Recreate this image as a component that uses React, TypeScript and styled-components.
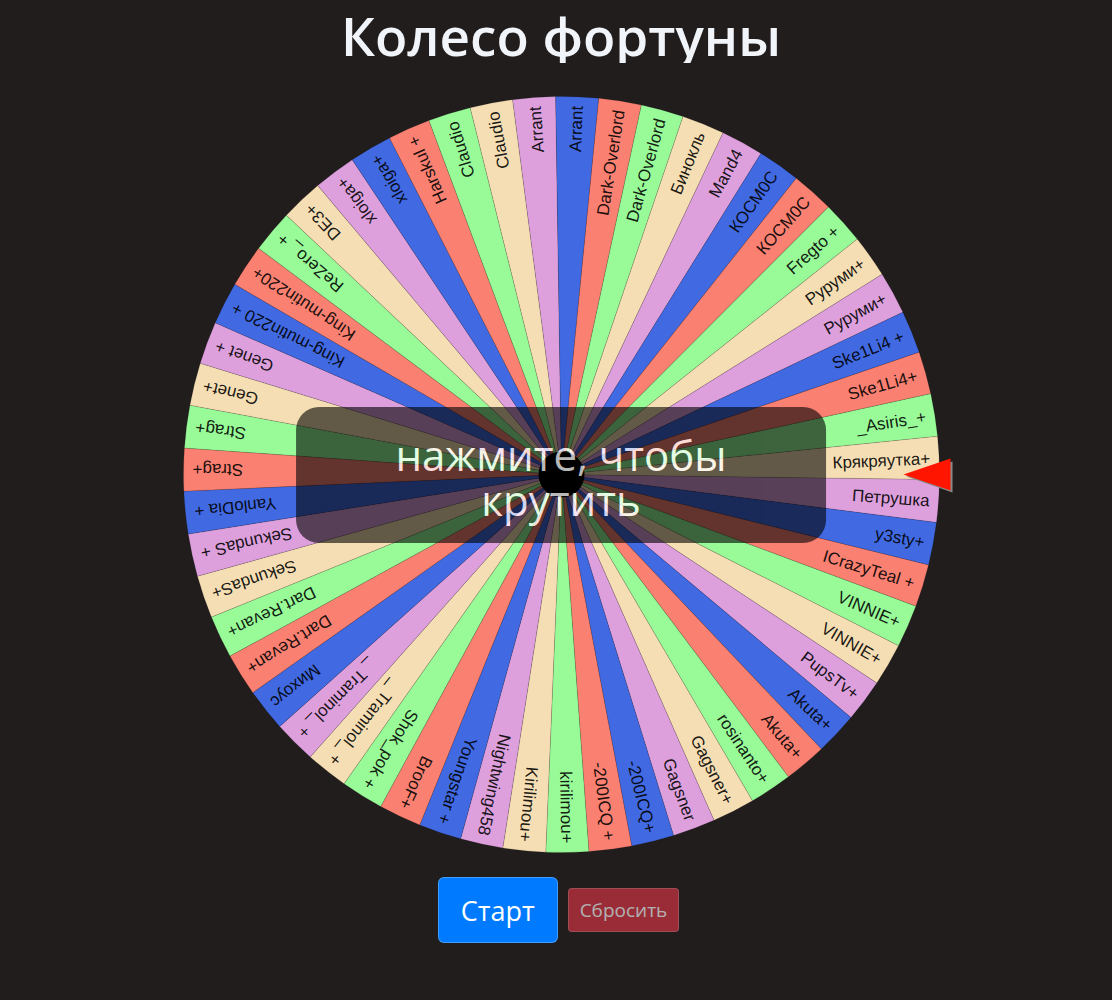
import React, { useState } from "react";
import styled, { createGlobalStyle } from "styled-components";

const GlobalStyle = createGlobalStyle`
  *, *::before, *::after { box-sizing: border-box; }
  body {
    margin: 0;
    background: #211d1d;
    color: #f1f4f8;
    font-family: "Segoe UI", "Open Sans", "Noto Sans", sans-serif;
  }
`;

const Page = styled.main`
  min-height: 100vh;
  display: flex;
  flex-direction: column;
  align-items: center;
  padding: 9px 0 24px 10px;
`;

const Title = styled.h1`
  margin: 0 0 33px;
  font-size: 53px;
  font-weight: 600;
  line-height: 54px;
  text-align: center;
  overflow: hidden;
`;

const WheelBox = styled.div`
  position: relative;
  width: 100%;
  max-width: 757px;
  aspect-ratio: 1;
`;

const WheelSvg = styled.svg`
  display: block;
  width: 100%;
  height: 100%;
  overflow: visible;
`;

const Disc = styled.g<{ $turn: number }>`
  transform: rotate(${(p) => p.$turn}deg);
  transition: transform 4s cubic-bezier(0.15, 0.6, 0.2, 1);
`;

const Label = styled.text`
  font-family: "Liberation Sans", Arial, sans-serif;
  font-size: 17px;
  fill: #000;
  fill-opacity: 0.9;
  text-anchor: end;
`;

const Prompt = styled.button`
  position: absolute;
  top: 50%;
  left: 50%;
  transform: translate(-50%, -50%);
  width: 70%;
  padding: 25px 72px 21px;
  border: 0;
  border-radius: 23px;
  background: rgba(0, 0, 0, 0.83);
  color: #fff;
  opacity: 0.72;
  font-family: inherit;
  font-size: 42px;
  line-height: 45px;
  text-align: center;
  cursor: pointer;
`;

const Actions = styled.div`
  display: flex;
  align-items: center;
  gap: 10px;
  margin: 24px 5px 0 0;
`;

const Button = styled.button<{ $kind: "primary" | "danger" }>`
  height: ${(p) => (p.$kind === "primary" ? 66 : 44)}px;
  padding: 0 ${(p) => (p.$kind === "primary" ? 22 : 11)}px;
  border: 1px solid rgba(255, 255, 255, 0.25);
  border-radius: ${(p) => (p.$kind === "primary" ? 6 : 4)}px;
  background: ${(p) => (p.$kind === "primary" ? "#007bff" : "#dc3545")};
  color: #fff;
  font-family: inherit;
  font-size: ${(p) => (p.$kind === "primary" ? 27 : 19)}px;
  line-height: 1;
  cursor: pointer;

  &:disabled {
    opacity: 0.65;
    cursor: default;
  }
`;

const COLORS = ["#dda0dd", "#4169e1", "#fa8072", "#98fb98", "#f5deb3"];

const NAMES = [
  "Петрушка", "y3sty+", "ICrazyTeal +", "VINNIE+", "VINNIE+",
  "PupsTv+", "Akuta+", "Akuta+", "rosinanto+", "Gagsner+",
  "Gagsner", "-200ICQ+", "-200ICQ +", "kirilimou+", "Kirilimou+",
  "Nightwing458", "Youngstar +", "BrooF+", "Shok_pok +", "_ Traminol_ +",
  "_ Traminol_ +", "Михоус", "Dart.Revan+", "Dart.Revan+", "SekundaS+",
  "SekundaS +", "YanloDia +", "Strag+", "Strag+", "Genet+",
  "Genet +", "King-mutin220 +", "King-mutin220+", "ReZero_ +", "DE3+",
  "xloiga+", "xloiga+", "Harskul +", "Claudio", "Claudio",
  "Arrant", "Arrant", "Dark-Overlord", "Dark-Overlord", "Бинокль",
  "Mand4", "КОСМ0С", "КОСМ0С", "Fregto +", "Руруми+",
  "Руруми+", "Ske1Li4 +", "Ske1Li4+", "_Asiris_+", "Крякряутка+",
];

const RADIUS = 378;
const LABEL_END = 369;
const STEP = 360 / NAMES.length;
const START = 0.75;

const rimPoint = (deg: number) => {
  const a = (deg * Math.PI) / 180;
  return `${(RADIUS * Math.cos(a)).toFixed(2)} ${(RADIUS * Math.sin(a)).toFixed(2)}`;
};

function Sector({ name, index }: { name: string; index: number }) {
  const from = START + index * STEP;
  return (
    <g>
      <path
        d={`M0 0L${rimPoint(from)}A${RADIUS} ${RADIUS} 0 0 1 ${rimPoint(from + STEP)}Z`}
        fill={COLORS[index % COLORS.length]}
        stroke="#000"
        strokeOpacity={0.2}
        strokeWidth={0.6}
      />
      <Label x={LABEL_END} y={6} transform={`rotate(${from + STEP / 2})`}>
        {name}
      </Label>
    </g>
  );
}

export default function App() {
  const [turn, setTurn] = useState(0);
  const spin = () => setTurn((t) => t + 1440 + Math.random() * 360);

  return (
    <>
      <GlobalStyle />
      <Page>
        <Title>Колесо фортуны</Title>
        <WheelBox>
          <WheelSvg viewBox="-378.5 -378.5 757 757" role="img" aria-label="Колесо фортуны">
            <Disc $turn={turn}>
              {NAMES.map((name, i) => (
                <Sector key={i} name={name} index={i} />
              ))}
            </Disc>
            <circle r={23} fill="#000" />
            <path d="M345 2L391 -13V18Z" fill="#8a8a8a" />
            <path d="M342 0L389 -16V16Z" fill="#ff1500" />
          </WheelSvg>
          {turn === 0 && <Prompt onClick={spin}>нажмите, чтобы крутить</Prompt>}
        </WheelBox>
        <Actions>
          <Button $kind="primary" onClick={spin}>Старт</Button>
          <Button $kind="danger" disabled={turn === 0} onClick={() => setTurn(0)}>
            Сбросить
          </Button>
        </Actions>
      </Page>
    </>
  );
}
